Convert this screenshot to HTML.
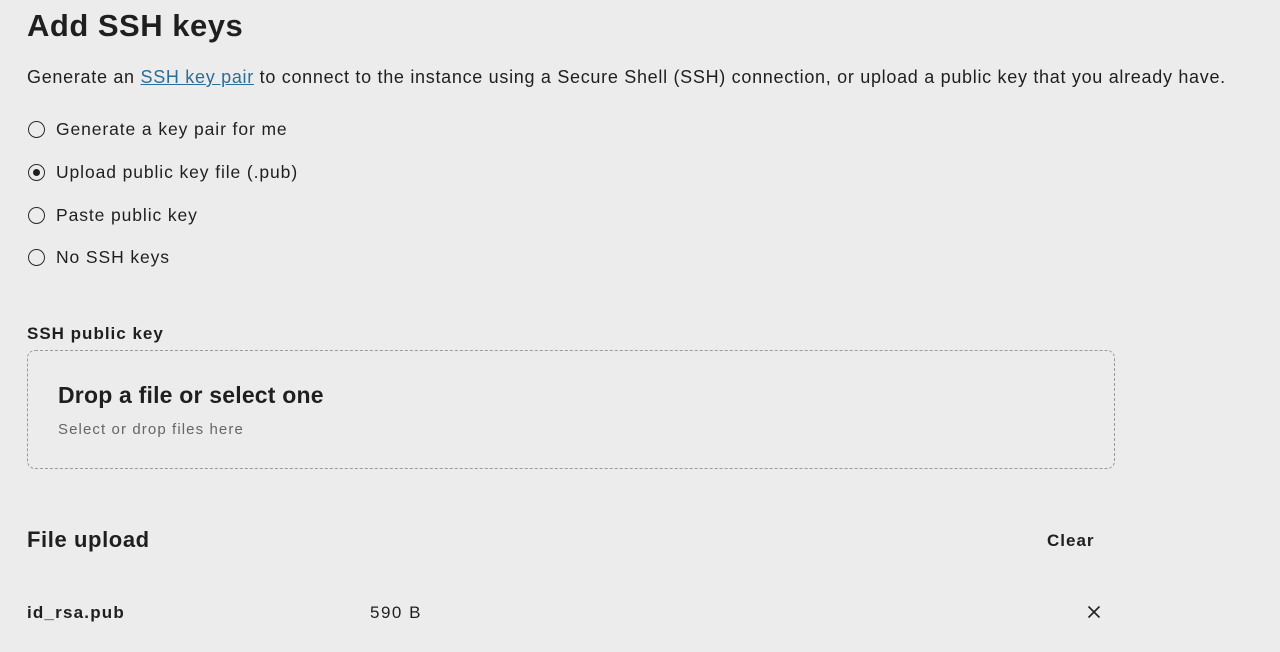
<!DOCTYPE html>
<html><head><meta charset="utf-8"><style>
body{margin:0;width:1280px;height:652px;background:#ececec;font-family:"Liberation Sans",sans-serif;color:#1f1f1f;position:relative;overflow:hidden}
.a{position:absolute;white-space:nowrap;line-height:1}
.r{position:absolute;left:28px;width:15px;height:15px;border:1.5px solid #2a2a2a;border-radius:50%;box-sizing:content-box}
.r.on::after{content:"";position:absolute;left:4px;top:4px;width:7px;height:7px;border-radius:50%;background:#1f1f1f}
.o{font-size:17.5px;letter-spacing:0.9px;left:56px}
</style></head><body>
<div class="a" style="left:27px;top:10px;font-size:31px;font-weight:bold;letter-spacing:0.5px">Add SSH keys</div>
<div class="a" style="left:27px;top:68px;font-size:18px;letter-spacing:0.7px">Generate an <span style="color:#2a6f97;text-decoration:underline">SSH key pair</span> to connect to the instance using a Secure Shell (SSH) connection, or upload a public key that you already have.</div>
<div class="r" style="top:121px"></div><div class="a o" style="top:121px">Generate a key pair for me</div>
<div class="r on" style="top:164px"></div><div class="a o" style="top:164px">Upload public key file (.pub)</div>
<div class="r" style="top:207px"></div><div class="a o" style="top:207px">Paste public key</div>
<div class="r" style="top:249px"></div><div class="a o" style="top:249px">No SSH keys</div>
<div class="a" style="left:27px;top:325px;font-size:17px;font-weight:bold;letter-spacing:1px">SSH public key</div>
<div style="position:absolute;left:27px;top:350px;width:1088px;height:119px;border:1px dashed #9a9a9a;border-radius:8px;box-sizing:border-box"></div>
<div class="a" style="left:58px;top:384px;font-size:23px;font-weight:bold;letter-spacing:0.2px">Drop a file or select one</div>
<div class="a" style="left:58px;top:422px;font-size:15px;color:#666;letter-spacing:1.1px">Select or drop files here</div>
<div class="a" style="left:27px;top:529px;font-size:22px;font-weight:bold;letter-spacing:0.6px">File upload</div>
<div class="a" style="left:1047px;top:532px;font-size:17px;font-weight:bold;letter-spacing:1px">Clear</div>
<div class="a" style="left:27px;top:604px;font-size:17px;font-weight:bold;letter-spacing:1.2px">id_rsa.pub</div>
<div class="a" style="left:370px;top:604px;font-size:17px;letter-spacing:1.5px">590 B</div>
<svg style="position:absolute;left:1087px;top:605px" width="14" height="14" viewBox="0 0 14 14"><path d="M1.5 1.5L12.5 12.5M12.5 1.5L1.5 12.5" stroke="#222" stroke-width="1.6"/></svg>
</body></html>
